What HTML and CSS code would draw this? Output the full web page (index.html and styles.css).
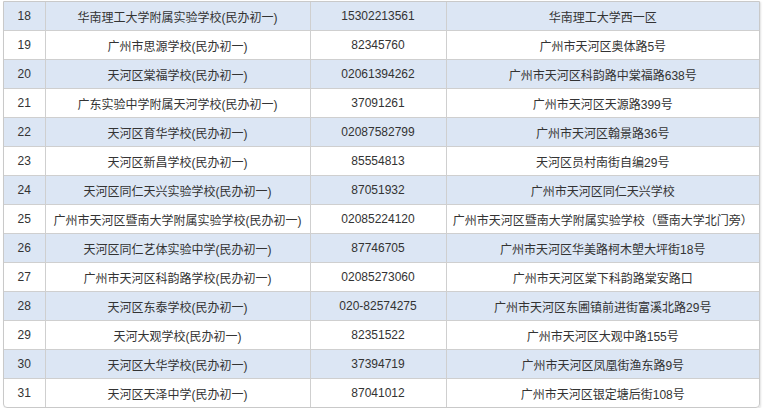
FILE: index.html
```html
<!DOCTYPE html>
<html lang="zh-CN">
<head>
<meta charset="utf-8">
<link rel="stylesheet" href="styles.css">
</head>
<body>
<div class="wrap">
<table class="tbl">
<colgroup><col class="c1"><col class="c2"><col class="c3"><col class="c4"></colgroup>
<tbody>
<tr class="alt"><td>18</td><td>华南理工大学附属实验学校(民办初一)</td><td>15302213561</td><td>华南理工大学西一区</td></tr>
<tr><td>19</td><td>广州市思源学校(民办初一)</td><td>82345760</td><td>广州市天河区奥体路5号</td></tr>
<tr class="alt"><td>20</td><td>天河区棠福学校(民办初一)</td><td>02061394262</td><td>广州市天河区科韵路中棠福路638号</td></tr>
<tr><td>21</td><td>广东实验中学附属天河学校(民办初一)</td><td>37091261</td><td>广州市天河区天源路399号</td></tr>
<tr class="alt"><td>22</td><td>天河区育华学校(民办初一)</td><td>02087582799</td><td>广州市天河区翰景路36号</td></tr>
<tr><td>23</td><td>天河区新昌学校(民办初一)</td><td>85554813</td><td>天河区员村南街自编29号</td></tr>
<tr class="alt"><td>24</td><td>天河区同仁天兴实验学校(民办初一)</td><td>87051932</td><td>广州市天河区同仁天兴学校</td></tr>
<tr><td>25</td><td>广州市天河区暨南大学附属实验学校(民办初一)</td><td>02085224120</td><td>广州市天河区暨南大学附属实验学校（暨南大学北门旁）</td></tr>
<tr class="alt"><td>26</td><td>天河区同仁艺体实验中学(民办初一)</td><td>87746705</td><td>广州市天河区华美路柯木塱大坪街18号</td></tr>
<tr><td>27</td><td>广州市天河区科韵路学校(民办初一)</td><td>02085273060</td><td>广州市天河区棠下科韵路棠安路口</td></tr>
<tr class="alt"><td>28</td><td>天河区东泰学校(民办初一)</td><td>020-82574275</td><td>广州市天河区东圃镇前进街富溪北路29号</td></tr>
<tr><td>29</td><td>天河大观学校(民办初一)</td><td>82351522</td><td>广州市天河区大观中路155号</td></tr>
<tr class="alt"><td>30</td><td>天河区大华学校(民办初一)</td><td>37394719</td><td>广州市天河区凤凰街渔东路9号</td></tr>
<tr><td>31</td><td>天河区天泽中学(民办初一)</td><td>87041012</td><td>广州市天河区银定塘后街108号</td></tr>
</tbody>
</table>
</div>
</body>
</html>
```
FILE: styles.css
```css
html, body {
  margin: 0;
  padding: 0;
  background: #ffffff;
}
body {
  font-family: "Liberation Sans", "Noto Sans CJK SC", sans-serif;
  font-size: 12px;
  color: #333333;
}
.wrap {
  margin: 1px 0 0 3px;
  width: 755px;
  border: 1px solid #c9c9c9;
  border-radius: 0 0 4px 4px;
  overflow: hidden;
  box-shadow: 1px 1px 2px rgba(0, 0, 0, 0.12);
}
.tbl {
  border-collapse: collapse;
  table-layout: fixed;
  width: 100%;
}
.c1 { width: 41px; }
.c2 { width: 265px; }
.c3 { width: 136px; }
.c4 { width: auto; }
.tbl td {
  height: 28px;
  padding: 0;
  text-align: center;
  vertical-align: middle;
  border: 1px solid #cfcfcf;
  white-space: nowrap;
}
.tbl tr:first-child td { border-top: 0; }
.tbl tr:last-child td { border-bottom: 0; }
.tbl td:first-child { border-left: 0; }
.tbl td:last-child { border-right: 0; }
.tbl tr.alt td { background: #dce6f4; }
```
